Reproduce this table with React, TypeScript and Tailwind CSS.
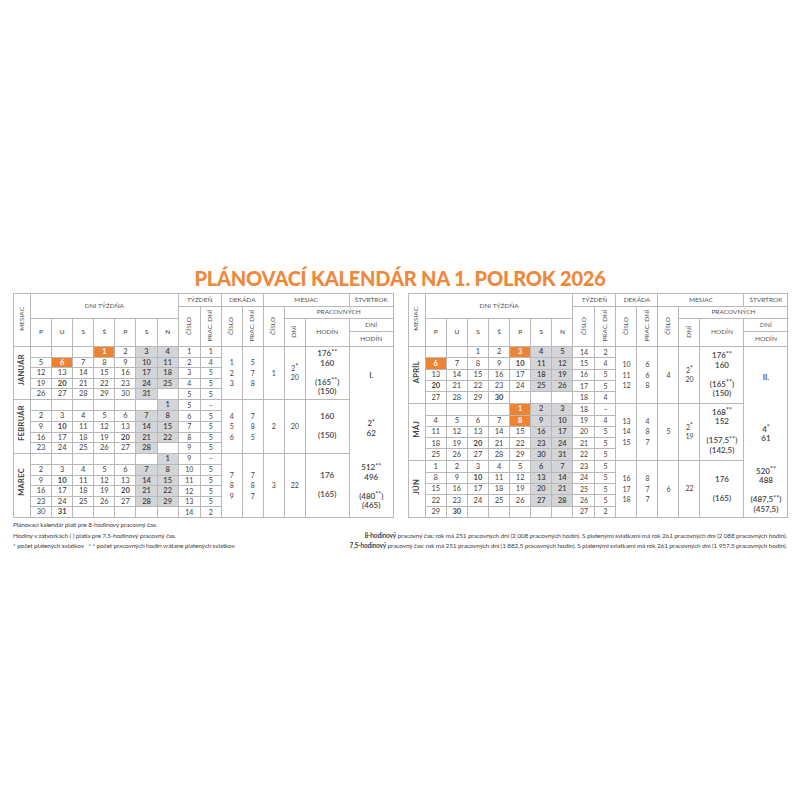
import { ReactNode } from 'react';

type Month = {
  name: string;
  weeks: string[][];
  wk: [string, string][];
  dek: string[];
  dekDni: string[];
  num: string;
  dni: string[];
  hod: string[];
};

type Half = {
  rowH: string;
  months: Month[];
  quarter: { h: string; lines: string[] }[];
};

const left: Half = {
  rowH: 'h-[10.6px]',
  months: [
    {
      name: 'JANUÁR',
      weeks: [
        ['', '', '', '1o', '2', '3', '4'],
        ['5', '6o', '7', '8', '9', '10', '11'],
        ['12', '13', '14', '15', '16', '17', '18'],
        ['19', '20b', '21', '22', '23', '24', '25'],
        ['26', '27', '28', '29', '30', '31', ''],
      ],
      wk: [['1', '1'], ['2', '4'], ['3', '5'], ['4', '5'], ['5', '5']],
      dek: ['1', '2', '3'],
      dekDni: ['5', '7', '8'],
      num: '1',
      dni: ['2*', '20'],
      hod: ['176**', '160', '', '(165**)', '(150)'],
    },
    {
      name: 'FEBRUÁR',
      weeks: [
        ['', '', '', '', '', '', '1'],
        ['2', '3', '4', '5', '6', '7', '8'],
        ['9', '10b', '11', '12', '13', '14', '15'],
        ['16', '17', '18', '19', '20b', '21', '22'],
        ['23', '24', '25', '26', '27', '28', ''],
      ],
      wk: [['5', '–'], ['6', '5'], ['7', '5'], ['8', '5'], ['9', '5']],
      dek: ['4', '5', '6'],
      dekDni: ['7', '8', '5'],
      num: '2',
      dni: ['20'],
      hod: ['160', '', '(150)'],
    },
    {
      name: 'MAREC',
      weeks: [
        ['', '', '', '', '', '', '1'],
        ['2', '3', '4', '5', '6', '7', '8'],
        ['9', '10b', '11', '12', '13', '14', '15'],
        ['16', '17', '18', '19', '20b', '21', '22'],
        ['23', '24', '25', '26', '27', '28', '29'],
        ['30', '31b', '', '', '', '', ''],
      ],
      wk: [['9', '–'], ['10', '5'], ['11', '5'], ['12', '5'], ['13', '5'], ['14', '2']],
      dek: ['7', '8', '9'],
      dekDni: ['7', '8', '7'],
      num: '3',
      dni: ['22'],
      hod: ['176', '', '(165)'],
    },
  ],
  quarter: [
    { h: 'h-[53px]', lines: ['I.'] },
    { h: 'h-[53px]', lines: ['2*', '62'] },
    { h: 'h-[64px]', lines: ['512**', '496', '', '(480**)', '(465)'] },
  ],
};

const right: Half = {
  rowH: 'h-[11.33px]',
  months: [
    {
      name: 'APRÍL',
      weeks: [
        ['', '', '1', '2', '3o', '4', '5'],
        ['6o', '7', '8', '9', '10b', '11', '12'],
        ['13', '14', '15', '16', '17', '18', '19'],
        ['20b', '21', '22', '23', '24', '25', '26'],
        ['27', '28', '29', '30b', '', '', ''],
      ],
      wk: [['14', '2'], ['15', '4'], ['16', '5'], ['17', '5'], ['18', '4']],
      dek: ['10', '11', '12'],
      dekDni: ['6', '6', '8'],
      num: '4',
      dni: ['2*', '20'],
      hod: ['176**', '160', '', '(165**)', '(150)'],
    },
    {
      name: 'MÁJ',
      weeks: [
        ['', '', '', '', '1o', '2', '3'],
        ['4', '5', '6', '7', '8o', '9', '10'],
        ['11', '12', '13', '14', '15', '16', '17'],
        ['18', '19', '20b', '21', '22', '23', '24'],
        ['25', '26', '27', '28', '29', '30', '31'],
      ],
      wk: [['18', '–'], ['19', '4'], ['20', '5'], ['21', '5'], ['22', '5']],
      dek: ['13', '14', '15'],
      dekDni: ['4', '8', '7'],
      num: '5',
      dni: ['2*', '19'],
      hod: ['168**', '152', '', '(157,5**)', '(142,5)'],
    },
    {
      name: 'JÚN',
      weeks: [
        ['1', '2', '3', '4', '5', '6', '7'],
        ['8', '9', '10b', '11', '12', '13', '14'],
        ['15', '16', '17', '18', '19', '20', '21'],
        ['22', '23', '24', '25', '26', '27', '28'],
        ['29', '30b', '', '', '', '', ''],
      ],
      wk: [['23', '5'], ['24', '5'], ['25', '5'], ['26', '5'], ['27', '2']],
      dek: ['16', '17', '18'],
      dekDni: ['8', '7', '7'],
      num: '6',
      dni: ['22'],
      hod: ['176', '', '(165)'],
    },
  ],
  quarter: [
    { h: 'h-[57px]', lines: ['II.'] },
    { h: 'h-[56px]', lines: ['4*', '61'] },
    { h: 'h-[57px]', lines: ['520**', '488', '', '(487,5**)', '(457,5)'] },
  ],
};

const days = ['P', 'U', 'S', 'Š', 'P', 'S', 'N'];

const cell = 'border border-[#b9b9b9] p-0 text-center align-middle';
const head = cell + ' font-normal text-[6.5px] leading-none text-[#555]';

// stars are set smaller and raised
function Stars({ text }: { text: string }) {
  const parts = text.split(/(\*+)/);
  return (
    <>
      {parts.map((p, i) =>
        p.startsWith('*') ? (
          <span key={i} className="relative -top-[1.5px] text-[7px]">{p}</span>
        ) : (
          <span key={i}>{p}</span>
        ),
      )}
    </>
  );
}

function Vert({ children, className = '' }: { children: ReactNode; className?: string }) {
  return <span className={'inline-block rotate-180 [writing-mode:vertical-rl] ' + className}>{children}</span>;
}

function Lines({ lines, className = '' }: { lines: string[]; className?: string }) {
  return (
    <div className={className}>
      {lines.map((l, i) => (
        <div key={i} className="h-[9.5px]">
          {l ? <Stars text={l} /> : null}
        </div>
      ))}
    </div>
  );
}

function Day({ v, weekend, rowH }: { v: string; weekend: boolean; rowH: string }) {
  const orange = v.endsWith('o');
  const bold = v.endsWith('b');
  const n = v.replace(/[ob]$/, '');
  let cls = cell + ' ' + rowH + ' text-[7.5px] leading-none';
  if (orange) cls += ' bg-[#ef8332] text-white font-bold';
  else if (weekend && n) cls += ' bg-[#d4d5d8] font-semibold';
  if (bold) cls += ' font-bold';
  return <td className={cls}>{n}</td>;
}

function Table({ half }: { half: Half }) {
  const total = half.months.reduce((a, m) => a + m.weeks.length, 0);
  return (
    <table className="w-[380px] table-fixed border-collapse text-[#3f3f3f]">
      <colgroup>
        <col className="w-[17px]" />
        {days.map((_, i) => (
          <col key={i} className="w-[21.1px]" />
        ))}
        <col className="w-[22px]" />
        <col className="w-[21px]" />
        <col className="w-[21px]" />
        <col className="w-[21px]" />
        <col className="w-[21px]" />
        <col className="w-[21px]" />
        <col className="w-[44px]" />
        <col className="w-[44px]" />
      </colgroup>
      <thead>
        <tr className="h-[13px]">
          <th rowSpan={4} className={head}>
            <Vert>MESIAC</Vert>
          </th>
          <th colSpan={7} rowSpan={2} className={head}>DNI TÝŽDŇA</th>
          <th colSpan={2} className={head}>TÝŽDEŇ</th>
          <th colSpan={2} className={head}>DEKÁDA</th>
          <th colSpan={3} className={head}>MESIAC</th>
          <th className={head}>ŠTVRŤROK</th>
        </tr>
        <tr className="h-[12px]">
          <th rowSpan={3} className={head}><Vert>ČÍSLO</Vert></th>
          <th rowSpan={3} className={head}><Vert>PRAC. DNÍ</Vert></th>
          <th rowSpan={3} className={head}><Vert>ČÍSLO</Vert></th>
          <th rowSpan={3} className={head}><Vert>PRAC. DNÍ</Vert></th>
          <th rowSpan={3} className={head}><Vert>ČÍSLO</Vert></th>
          <th colSpan={3} className={head}>PRACOVNÝCH</th>
        </tr>
        <tr className="h-[13px]">
          {days.map((d, i) => (
            <th key={i} rowSpan={2} className={head + ' font-semibold'}>{d}</th>
          ))}
          <th rowSpan={2} className={head}><Vert>DNÍ</Vert></th>
          <th rowSpan={2} className={head}>HODÍN</th>
          <th className={head}>DNÍ</th>
        </tr>
        <tr className="h-[15px]">
          <th className={head}>HODÍN</th>
        </tr>
      </thead>
      <tbody>
        {half.months.map((m, mi) =>
          m.weeks.map((w, wi) => {
            const n = m.weeks.length;
            return (
              <tr key={mi + '-' + wi}>
                {wi === 0 && (
                  <td rowSpan={n} className={cell + ' border-[#a9a9a9]'}>
                    <Vert className="text-[7.5px] font-bold tracking-[0.3px] text-[#444]">{m.name}</Vert>
                  </td>
                )}
                {w.map((v, di) => (
                  <Day key={di} v={v} weekend={di > 4} rowH={half.rowH} />
                ))}
                <td className={cell + ' text-[7px] leading-none'}>{m.wk[wi][0]}</td>
                <td className={cell + ' text-[7px] leading-none'}>{m.wk[wi][1]}</td>
                {wi === 0 && (
                  <>
                    <td rowSpan={n} className={cell + ' text-[7px] leading-[10.5px]'}>
                      {m.dek.map((d, i) => <div key={i}>{d}</div>)}
                    </td>
                    <td rowSpan={n} className={cell + ' text-[7px] leading-[10.5px]'}>
                      {m.dekDni.map((d, i) => <div key={i}>{d}</div>)}
                    </td>
                    <td rowSpan={n} className={cell + ' text-[7px]'}>{m.num}</td>
                    <td rowSpan={n} className={cell + ' text-[7px] leading-[9px]'}>
                      {m.dni.map((d, i) => <div key={i}><Stars text={d} /></div>)}
                    </td>
                    <td rowSpan={n} className={cell + ' text-[8px] font-semibold leading-[9.5px]'}>
                      <Lines lines={m.hod} />
                    </td>
                  </>
                )}
                {mi === 0 && wi === 0 && (
                  <td rowSpan={total} className={cell + ' text-[8px] font-semibold'}>
                    <div className="flex flex-col">
                      {half.quarter.map((q, qi) => (
                        <div key={qi} className={q.h + ' flex flex-col items-center justify-center'}>
                          <Lines lines={q.lines} />
                        </div>
                      ))}
                    </div>
                  </td>
                )}
              </tr>
            );
          }),
        )}
      </tbody>
    </table>
  );
}

export default function App() {
  return (
    <div className="h-[800px] w-[800px] bg-white px-[13px] pt-[267px] font-['Lato','Open_Sans',sans-serif]">
      <h1 className="mb-[4px] h-[22px] text-center text-[20px] leading-[22px] font-black tracking-[-0.2px] text-[#f0883b]">
        PLÁNOVACÍ KALENDÁR NA 1. POLROK 2026
      </h1>
      <div className="flex gap-[14px]">
        <Table half={left} />
        <Table half={right} />
      </div>
      <div className="mt-[2px] flex justify-between text-[6.5px] leading-[10.5px] tracking-[-0.15px] text-[#444]">
        <div>
          <div>Plánovací kalendár platí pre 8-hodinový pracovný čas.</div>
          <div>Hodiny v zátvorkách ( ) platia pre 7,5-hodinový pracovný čas.</div>
          <div>* počet platených sviatkov &nbsp; * * počet pracovných hodín vrátane platených sviatkov</div>
        </div>
        <div className="pt-[10.5px] text-right">
          <div>
            <b className="font-bold">8-hodinový</b> pracovný čas: rok má 251 pracovných dní (2 008 pracovných hodín). S platenými sviatkami má rok 261 pracovných dní (2 088 pracovných hodín).
          </div>
          <div>
            <b className="font-bold">7,5-hodinový</b> pracovný čas: rok má 251 pracovných dní (1 882,5 pracovných hodín). S platenými sviatkami má rok 261 pracovných dní (1 957,5 pracovných hodín).
          </div>
        </div>
      </div>
    </div>
  );
}
